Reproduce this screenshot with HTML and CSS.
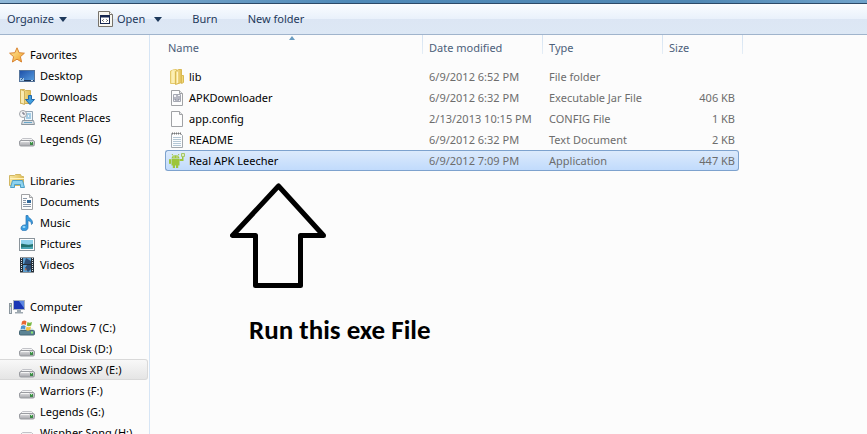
FILE: index.html
```
<!DOCTYPE html>
<html lang="en">
<head>
    <meta charset="UTF-8">
    <meta name="viewport" content="width=device-width, initial-scale=1.0">
    <title>Real APK Leecher</title>
    <link rel="stylesheet" href="styles.css">
</head>
<body>
    <svg class="symbols" aria-hidden="true">
        <defs>
            <linearGradient id="driveBody" x1="0" y1="0" x2="0" y2="1">
                <stop offset="0" stop-color="#e4e4e6"/>
                <stop offset="1" stop-color="#a4a5aa"/>
            </linearGradient>
            <linearGradient id="gold" x1="0" y1="0" x2="1" y2="0">
                <stop offset="0" stop-color="#f8e6a0"/>
                <stop offset="1" stop-color="#e0bd55"/>
            </linearGradient>
            <linearGradient id="screen" x1="0" y1="0" x2="1" y2="1">
                <stop offset="0" stop-color="#1d4fa8"/>
                <stop offset="1" stop-color="#5aa0e0"/>
            </linearGradient>
            <linearGradient id="starFill" x1="0" y1="0" x2="1" y2="1">
                <stop offset="0" stop-color="#fff2a8"/>
                <stop offset="1" stop-color="#f09a20"/>
            </linearGradient>
            <symbol id="drive" viewBox="0 0 16 16">
                <path d="M3.500 7.500h9l3 3h-15z" fill="#f4f4f5" stroke="#c2c3c8"/>
                <rect x=".5" y="9.500" width="15" height="5.500" rx="1.500" fill="url(#driveBody)" stroke="#9a9ca1"/>
                <path d="M2 10.500h8" stroke="#f5f5f5"/>
                <rect x="11" y="11" width="3" height="3" fill="#3d8a48"/>
                <path d="M12 11.500h1" stroke="#a6f0a0"/>
            </symbol>
            <symbol id="page" viewBox="0 0 16 16">
                <path d="M2.500.5h8l3 3v12h-11z" fill="#fdfdfd" stroke="#a0a2a5"/>
                <path d="M10.500.5v3h3" fill="#e4e6e8" stroke="#a0a2a5"/>
            </symbol>
        </defs>
    </svg>

    <div class="window-edge"></div>
    <div class="toolbar">
        <button class="organize">Organize <span class="caret"></span></button>
        <button class="open">
            <svg class="icon" viewBox="0 0 16 16">
                <path d="M1.500.5h11l3 3v12h-14z" fill="#f7f6f0" stroke="#77736b"/>
                <path d="M12.500.5v3h3" fill="#fff" stroke="#77736b"/>
                <rect x="3.500" y="4.500" width="9" height="8" fill="#fff" stroke="#16264f"/>
                <path d="M3 5.500h10" stroke="#16264f" stroke-width="2"/>
                <path d="M6.500 8.500l-1 1 1 1M9.500 8.500l1 1-1 1" fill="none" stroke="#222"/>
            </svg>
            Open <span class="caret"></span>
        </button>
        <button class="burn">Burn</button>
        <button>New folder</button>
    </div>

    <div class="explorer">
        <nav class="sidebar">
            <ul class="group">
                <li class="root"><a href="#">
                    <svg class="icon" viewBox="0 0 16 16"><path d="M8 .8l2.100 4.900 5.300.5-4 3.500 1.200 5.300L8 12.200 3.400 15l1.200-5.300-4-3.500 5.300-.5z" fill="url(#starFill)" stroke="#d98432"/></svg>
                    Favorites</a></li>
                <li><a href="#">
                    <svg class="icon" viewBox="0 0 16 16"><rect x=".5" y="2.500" width="15" height="11" fill="url(#screen)" stroke="#55749b"/><path d="M1 12.500h14" stroke="#1c3558"/><path d="M1 10h4v3H1z" fill="#9fc5e6"/><path d="M2 12l2-2" stroke="#315d94"/><path d="M12 12.500h2" stroke="#d7e8f8"/></svg>
                    Desktop</a></li>
                <li><a href="#">
                    <svg class="icon" viewBox="0 0 16 16"><path d="M1.500.5h4l1 1h5v13h-10z" fill="url(#gold)" stroke="#d0b15a"/><path d="M1.500.5l4 1.500v13.500l-4-1.500z" fill="#f9eab0" stroke="#d0b15a"/><path d="M9.500 6.500h3v4h3L11 15.500 6.500 10.500h3z" fill="#3f9fe0" stroke="#2468a8"/></svg>
                    Downloads</a></li>
                <li><a href="#">
                    <svg class="icon" viewBox="0 0 16 16"><path d="M5.500 1.500h8v9h-8z" fill="#eef6fb" stroke="#95a5b4"/><path d="M7 4h5M7 6h2M10 6h2M7 8h5" stroke="#5aa3cf"/><path d="M3.500 10.500h11l1 4h-13z" fill="#d8dde2" stroke="#8c969f"/><path d="M5 12.500h8" stroke="#68a6c8"/><circle cx="4" cy="4" r="3.500" fill="#f2f3f5" stroke="#a1a5aa"/><path d="M4 2v2h2" fill="none" stroke="#667"/></svg>
                    Recent Places</a></li>
                <li><a href="#"><svg class="icon"><use href="#drive"/></svg>Legends (G)</a></li>
            </ul>
            <ul class="group">
                <li class="root"><a href="#">
                    <svg class="icon" viewBox="0 0 16 16"><path d="M.5 2.500h5l1-1h5l1 2h2v9H.5z" fill="url(#gold)" stroke="#d1b763"/><path d="M1 5.500h14" stroke="#fff3bd"/><path d="M3.500 7.500h10l2 7h-4v-3h-6v3h-4z" fill="#8ed3ef" stroke="#4d9fc7"/></svg>
                    Libraries</a></li>
                <li><a href="#">
                    <svg class="icon" viewBox="0 0 16 16"><use href="#page"/><path d="M4 4.500h4M4 6.500h3M4 8.500h3M4 10.500h8M4 12.500h8" stroke="#8b98a8"/><path d="M8 6h4v3H8z" fill="#2f6698"/></svg>
                    Documents</a></li>
                <li><a href="#">
                    <svg class="icon" viewBox="0 0 16 16"><path d="M7 .5h2c0 3 5 3 4.500 8l-1 1c0-3-2-3.500-3.500-4v7c0 4-7 4.500-7 .8C2 10.500 4.500 9.500 7 10z" fill="#379be0" stroke="#256fae" stroke-width=".7"/><ellipse cx="5" cy="12" rx="1.500" ry="1" fill="#9adafa"/></svg>
                    Music</a></li>
                <li><a href="#">
                    <svg class="icon" viewBox="0 0 16 16"><rect x=".5" y="2.500" width="15" height="12" fill="#fff" stroke="#8a949b"/><path d="M2 4h12v9H2z" fill="#8fd2ec"/><path d="M2 8c3-1 5 2 12 0v5H2z" fill="#23736f"/><path d="M2 11.500c4-1 7 0 12-1V13H2z" fill="#4aa5b3"/></svg>
                    Pictures</a></li>
                <li><a href="#">
                    <svg class="icon" viewBox="0 0 16 16"><path d="M1 .5h14v15H1z" fill="#263039"/><path d="M4 1h8v6H4zM4 8h8v7H4z" fill="#5a9ed0"/><path d="M7 1l5 3v3H5zM12 8v4l-3 3-3-4 2-3z" fill="#2e4d74"/><path d="M6 11l2 1-2 2z" fill="#b96c47"/><path d="M2.500 1v14M13.500 1v14" stroke="#dce5ec" stroke-dasharray="1 1"/></svg>
                    Videos</a></li>
            </ul>
            <ul class="group">
                <li class="root"><a href="#">
                    <svg class="icon" viewBox="0 0 16 16"><rect x=".5" y="4.500" width="2" height="10" fill="#d6dce1" stroke="#8b969e"/><path d="M1 7h1" stroke="#3ba544"/><rect x="4.500" y="1.500" width="11" height="9" fill="#1937b5" stroke="#a7b2bf"/><path d="M10 2h5v7z" fill="#5c87e2"/><path d="M8 11h4v2h2v1.500H6V13h2z" fill="#9da8b0"/></svg>
                    Computer</a></li>
                <li><a href="#">
                    <svg class="icon" viewBox="0 0 16 16"><path d="M2.500 8.500h11l2 2H.5z" fill="#c9dce3"/><rect x=".5" y="10.500" width="15" height="4.500" rx="1" fill="#5b8394" stroke="#466674"/><path d="M12 12.500h2" stroke="#8be76f" stroke-width="2"/><path d="M3 1.500q2.500-2 4.500 0l-.7 3.500q-2-1.500-4.500 0z" fill="#e76732"/><path d="M8.500 2q2 1.500 4.500 0l-.8 3.500q-2.500 1.500-4.500 0z" fill="#78b843"/><path d="M2.200 6q2.500-1.500 4.500 0L6 9.500q-2-1.500-4.500 0z" fill="#4c93cf"/><path d="M7.500 6.500q2 1.500 4.500 0l-.7 3.500q-2.500 1.500-4.500 0z" fill="#f3c344"/></svg>
                    Windows 7 (C:)</a></li>
                <li><a href="#"><svg class="icon"><use href="#drive"/></svg>Local Disk (D:)</a></li>
                <li class="current"><a href="#"><svg class="icon"><use href="#drive"/></svg>Windows XP (E:)</a></li>
                <li><a href="#"><svg class="icon"><use href="#drive"/></svg>Warriors (F:)</a></li>
                <li><a href="#"><svg class="icon"><use href="#drive"/></svg>Legends (G:)</a></li>
                <li><a href="#"><svg class="icon"><use href="#drive"/></svg>Wispher Song (H:)</a></li>
            </ul>
        </nav>

        <main class="content">
            <table class="files">
                <thead>
                    <tr>
                        <th class="name sorted">Name</th>
                        <th class="date">Date modified</th>
                        <th class="type">Type</th>
                        <th class="size">Size</th>
                    </tr>
                </thead>
                <tbody>
                    <tr>
                        <td><div class="file">
                            <svg class="icon" viewBox="0 0 16 16"><path d="M1.500 2l4-1.500h2v14h-6z" fill="#f8e8a0" stroke="#e4c96c"/><path d="M6.500 2.500l3-2h3v13l-6 2z" fill="url(#gold)" stroke="#d9b953"/><path d="M12.500 6.500h2v7l-2 1z" fill="#f2d978" stroke="#d9b953"/><path d="M4 1v13M8.500 3v11" stroke="#fff5c8"/></svg>
                            lib</div></td>
                        <td>6/9/2012 6:52 PM</td>
                        <td>File folder</td>
                        <td></td>
                    </tr>
                    <tr>
                        <td><div class="file">
                            <svg class="icon" viewBox="0 0 16 16"><use href="#page"/><path d="M4.500 4.500h7v7h-7z" fill="#f2f2f5" stroke="#a5a8b2"/><path d="M6 7v3h4V6M8 5v4" fill="none" stroke="#777b8c"/></svg>
                            APKDownloader</div></td>
                        <td>6/9/2012 6:32 PM</td>
                        <td>Executable Jar File</td>
                        <td>406 KB</td>
                    </tr>
                    <tr>
                        <td><div class="file"><svg class="icon"><use href="#page"/></svg>app.config</div></td>
                        <td>2/13/2013 10:15 PM</td>
                        <td>CONFIG File</td>
                        <td>1 KB</td>
                    </tr>
                    <tr>
                        <td><div class="file">
                            <svg class="icon" viewBox="0 0 16 16"><path d="M2.500 1.500h9l2 2v12h-11z" fill="#fcfdfe" stroke="#a3a8ad"/><path d="M3 1.500h9" stroke="#777" stroke-width="2" stroke-dasharray="1 1"/><path d="M4 5.500h8M4 7.500h8M4 9.500h8M4 11.500h8M4 13.500h8" stroke="#b4c7d5"/></svg>
                            README</div></td>
                        <td>6/9/2012 6:32 PM</td>
                        <td>Text Document</td>
                        <td>2 KB</td>
                    </tr>
                    <tr class="selected">
                        <td><div class="file">
                            <svg class="icon" viewBox="0 0 16 16"><g fill="#9dc53b"><path d="M2.500 5.500C2.500 1 10.500 1 10.500 5.500z"/><path d="M2.500 6h8v6.500H9.200V15H7v-2.500H6V15H3.800v-2.500H2.500z"/><rect y="6" width="2" height="5" rx=".8"/><path d="M10.500 6H13V3.500h1.500V8h-4z"/></g><path d="M4 2.500L3 1M9 2.500L10 1" stroke="#9dc53b"/><path d="M12.500.5h3v3h-3z" fill="#dcecc0" stroke="#a4c76a"/><path d="M4.500 4h1M7.500 4h1" stroke="#fff"/></svg>
                            Real APK Leecher</div></td>
                        <td>6/9/2012 7:09 PM</td>
                        <td>Application</td>
                        <td>447 KB</td>
                    </tr>
                </tbody>
            </table>

            <div class="note">
                <svg class="arrow" viewBox="0 0 96 106">
                    <path d="M48.500 3L2.500 52.500h23v50h45v-50h23z" fill="none" stroke="#000" stroke-width="5" stroke-linejoin="round"/>
                </svg>
                <p>Run this exe File</p>
            </div>
        </main>
    </div>
</body>
</html>
```
FILE: styles.css
```
* {
    box-sizing: border-box;
}
body {
    display: flex;
    flex-direction: column;
    height: 100vh;
    margin: 0;
    overflow: hidden;
    background: #fcfcfc;
    color: #000;
    font-family: "Noto Sans", "Open Sans", sans-serif;
    font-size: 11px;
    line-height: 20px;
}
.symbols {
    position: absolute;
    width: 0;
    height: 0;
}
.icon {
    flex: none;
    width: 16px;
    height: 16px;
}

/* toolbar */
.window-edge {
    flex: none;
    height: 4px;
    background: linear-gradient(90deg, #8fb8d8, #4f8ab8 40%, #5088b4 80%, #6fa3cb);
    border-bottom: 1px solid #2c4a68;
}
.toolbar {
    display: flex;
    flex: none;
    align-items: center;
    height: 31px;
    padding-left: 7px;
    background: linear-gradient(#fafdff, #e9f1fb 50%, #dce6f4 50%, #dde8f5);
    border-bottom: 1px solid #a0b4cc;
}
.toolbar button {
    display: flex;
    align-items: center;
    padding: 0;
    border: 0;
    background: none;
    color: #1e395b;
    font: inherit;
}
.caret {
    margin-left: 5px;
    border: 4px solid transparent;
    border-top: 5px solid #1e395b;
    border-bottom: 0;
}
.toolbar .organize {
    margin-right: 30px;
}
.toolbar .open {
    gap: 4px;
    margin-right: 30px;
}
.toolbar .burn {
    margin-right: 30px;
}

/* navigation pane */
.explorer {
    display: flex;
    flex: 1;
    min-height: 0;
}
.sidebar {
    flex: none;
    width: 150px;
    padding-top: 9px;
    overflow: hidden;
    border-right: 1px solid #d6e5f5;
}
.group {
    margin: 0 0 21px;
    padding: 0;
    list-style: none;
}
.group li {
    height: 21px;
    margin-right: 1px;
    padding-left: 19px;
    border: 1px solid transparent;
    border-left: 0;
}
.group .root {
    padding-left: 9px;
}
.group a {
    display: flex;
    align-items: center;
    gap: 5px;
    height: 19px;
    color: #000;
    text-decoration: none;
    white-space: nowrap;
}
.group .current {
    background: linear-gradient(#f8f8f8, #e5e5e5);
    border-color: #d9d9d9;
    border-radius: 0 3px 3px 0;
}

/* file list */
.content {
    flex: 1;
    min-width: 0;
    padding-left: 15px;
}
.files {
    width: 574px;
    table-layout: fixed;
    border-collapse: separate;
    border-spacing: 0;
}
.files th {
    position: relative;
    height: 31px;
    padding: 3px 0 8px 6px;
    color: #4c607a;
    font-weight: normal;
    text-align: left;
}
.files th::after {
    content: "";
    position: absolute;
    top: 0;
    right: 0;
    width: 1px;
    height: 19px;
    background: linear-gradient(#d5e3f2, #e4edf6);
}
.files .name {
    width: 258px;
    padding-left: 3px;
}
.files .date,
.files .type {
    width: 120px;
}
.files .size::after {
    right: -4px;
}
.files .sorted::before {
    content: "";
    position: absolute;
    top: 1px;
    left: 124px;
    border: 3px solid transparent;
    border-top: 0;
    border-bottom: 4px solid #6a9cc0;
}
.files td {
    height: 21px;
    padding: 0 0 0 6px;
    border: 1px solid transparent;
    border-width: 1px 0;
    color: #6d6d6d;
    line-height: 19px;
    white-space: nowrap;
}
.files td:first-child {
    padding-left: 3px;
    border-left-width: 1px;
    color: #000;
}
.files td:last-child {
    padding-right: 3px;
    border-right-width: 1px;
    text-align: right;
}
.file {
    display: flex;
    align-items: center;
    gap: 4px;
}
.selected td {
    background: linear-gradient(#dceafc, #c1dbfc);
    border-color: #7da2ce;
}
.selected td:first-child {
    border-radius: 3px 0 0 3px;
}
.selected td:last-child {
    border-radius: 0 3px 3px 0;
}

/* pointer to the file to start */
.note {
    margin: 12px 0 0 65px;
}
.arrow {
    display: block;
    width: 96px;
    height: 106px;
}
.note p {
    margin: 25px 0 0 19px;
    font-family: Calibri, Lato, sans-serif;
    font-size: 27px;
    font-weight: bold;
    line-height: 32px;
}
```
